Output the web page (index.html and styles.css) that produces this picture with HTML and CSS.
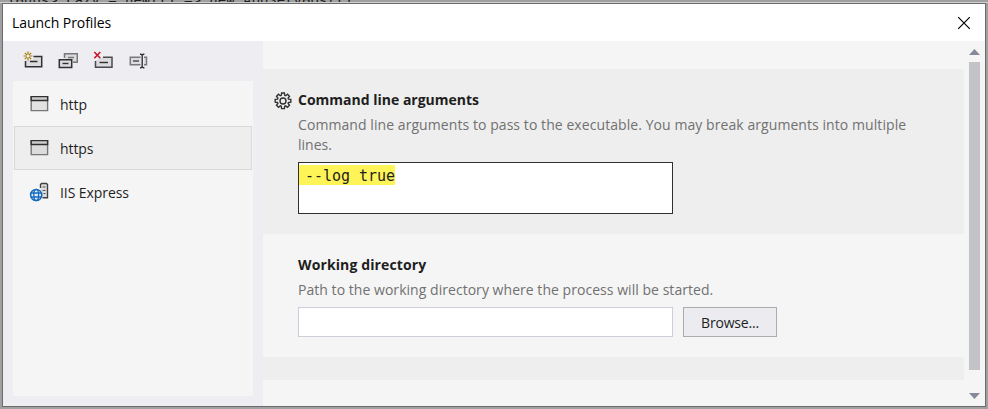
FILE: index.html
```html
<!DOCTYPE html>
<html lang="en">
<head>
<meta charset="utf-8">
<title>Launch Profiles</title>
<link rel="stylesheet" href="styles.css">
</head>
<body>
<div class="backdrop-code">IHubs&gt; Lazy = new(() =&gt; new AppServHost()</div>
<main class="dialog">
  <header class="titlebar">
    <h1>Launch Profiles</h1>
    <svg class="close" width="14" height="14" viewBox="0 0 14 14"><path d="M1.200 1.200l11.600 11.600M12.800 1.200L1.200 12.800" stroke="#000" stroke-width="1.200"/></svg>
  </header>
  <div class="body">
    <aside class="side">
      <div class="toolbar">
        <svg width="20" height="20" viewBox="0 0 20 20" fill="none"><path d="M10.500 6h8v9.500h-16V9.500l8-1z" fill="#dcdcde"/><path d="M10.500 5.500h8.200v10.200H2.500V10M7 10.500h7.500" stroke="#303030" stroke-width="1.500"/><path d="M5 .5v9M.5 5h9M1.800 1.800l6.400 6.400M8.200 1.800L1.800 8.200" stroke="#a57a0a" stroke-width="1.200"/><circle cx="5" cy="5" r="1.500" fill="#f0f0f5"/></svg>
        <svg width="20" height="20" viewBox="0 0 20 20" fill="none"><path d="M6.500 7V2.700h12.800v8.500H15M10 6.500h6" fill="#dcdcde" stroke="#77777b" stroke-width="1.500"/><path d="M1.300 8.700h12.400v7.800H1.300z" fill="#dcdcde" stroke="#303030" stroke-width="1.500"/><path d="M4.500 12.500h6" stroke="#303030" stroke-width="1.400"/></svg>
        <svg width="20" height="20" viewBox="0 0 20 20" fill="none"><path d="M10 6.200h9v10H2.500V10" fill="#dcdcde" stroke="#4a4a4c" stroke-width="1.500"/><path d="M6.500 11.500H15" stroke="#303030" stroke-width="1.400"/><path d="M1.300 1l6 6.200M7.300 1l-6 6.200" stroke="#c91528" stroke-width="1.600"/></svg>
        <svg width="20" height="20" viewBox="0 0 20 20" fill="none"><path d="M12.500 6.300H2.300v7.400h10.200M16 6.300h2.500v7.400H16" fill="#dcdcde" stroke="#79797d" stroke-width="1.500"/><path d="M5 10h6" stroke="#505054" stroke-width="1.500"/><path d="M12 3.300h1l1.200 1 1.200-1h1M14.200 4v12M12 16.700h1l1.200-1 1.200 1h1" stroke="#303030" stroke-width="1.400"/></svg>
      </div>
      <ul class="profiles">
        <li><svg width="20" height="20" viewBox="0 0 20 20"><path d="M2.200 2.600h16.400v14H2.200z" fill="#e2e2e2" stroke="#777" stroke-width="1.400"/><path d="M2.200 6.500V2.600h16.400v3.900z" fill="#ccc" stroke="#303030" stroke-width="1.400"/></svg><span>http</span></li>
        <li class="selected"><svg width="20" height="20" viewBox="0 0 20 20"><path d="M2.200 2.600h16.400v14H2.200z" fill="#dcdcdc" stroke="#777" stroke-width="1.400"/><path d="M2.200 6.500V2.600h16.400v3.900z" fill="#ccc" stroke="#303030" stroke-width="1.400"/></svg><span class="t-https">https</span></li>
        <li><svg width="20" height="20" viewBox="0 0 20 20" fill="none"><path d="M11.500 6V2.500l1-1h5l1 1v13.300h-5" fill="#dedede" stroke="#404040" stroke-width="1.400"/><path d="M13.500 5h3M13.500 8.500h3M14.500 11.500h2" stroke="#555"/><circle cx="7.200" cy="13" r="5.600" fill="#dcecf9" stroke="#1469bd" stroke-width="1.500"/><path d="M1.700 11h11M1.700 15h11" stroke="#1469bd" stroke-width="1.300"/><ellipse cx="7.200" cy="13" rx="2.400" ry="5.600" stroke="#1469bd" stroke-width="1.300"/></svg><span class="t-iis">IIS Express</span></li>
      </ul>
    </aside>
    <div class="content">
      <div class="sections">
        <section class="option shaded">
          <svg class="gear" width="18" height="18" viewBox="0 0 18 18" fill="none" stroke="#303030" stroke-width="1.400"><path d="M7.600 1h2.800l.3 2.300 1 .4 1.800-1.400 2 2-1.400 1.800.4 1 2.300.3v2.800l-2.300.3-.4 1 1.400 1.800-2 2-1.800-1.400-1 .4-.3 2.300H7.600l-.3-2.300-1-.4-1.800 1.400-2-2 1.400-1.800-.4-1-2.300-.3V7.400l2.300-.3.4-1-1.400-1.800 2-2 1.800 1.400 1-.4z"/><circle cx="9" cy="9" r="3"/></svg>
          <h2>Command line arguments</h2>
          <p><span class="t-desc">Command line arguments to pass to the executable. You may break arguments into multiple</span><br>lines.</p>
          <div class="args"><mark>--log true</mark></div>
        </section>
        <section class="option">
          <h2 class="t-work">Working directory</h2>
          <p class="t-path">Path to the working directory where the process will be started.</p>
          <div class="row"><div class="field"></div><button>Browse...</button></div>
        </section>
        <div class="next"></div>
      </div>
      <div class="scrollbar">
        <svg width="11" height="6" viewBox="0 0 11 6"><path d="M5.500 0L11 6H0z" fill="#868999"/></svg>
        <div class="thumb"></div>
        <svg width="11" height="6" viewBox="0 0 11 6"><path d="M0 0h11L5.500 6z" fill="#868999"/></svg>
      </div>
    </div>
  </div>
</main>
</body>
</html>
```
FILE: styles.css
```css
* { box-sizing: border-box; }
body {
  margin: 0;
  width: 988px;
  height: 409px;
  overflow: hidden;
  background: #a0a0a0;
  color: #1e1e1e;
  font: 14px/20px "Open Sans", "Noto Sans", sans-serif;
}
h1, h2, p, ul { margin: 0; padding: 0; }
svg { display: block; flex: none; }
span { white-space: nowrap; }
.backdrop-code {
  height: 3px;
  padding-left: 7px;
  overflow: hidden;
  line-height: 1px;
  white-space: pre;
  font-family: "DejaVu Sans Mono", monospace;
  border-bottom: 1px solid #d0d0d0;
}
.dialog {
  width: 984px;
  height: 404px;
  margin-left: 2px;
  border: 1px solid #6c6c6c;
  background: #fff;
}
.titlebar {
  display: flex;
  align-items: center;
  justify-content: space-between;
  height: 37px;
  padding: 0 14px 0 9px;
}
h1 { font-size: 14px; font-weight: 400; color: #000; letter-spacing: -0.06px; }
.body { display: flex; height: 365px; }
.side {
  display: flex;
  flex-direction: column;
  width: 260px;
  padding: 10px 10px 10px;
  background: #eeeef2;
}
.toolbar { display: flex; gap: 15px; height: 30px; padding-left: 10px; }
.profiles {
  flex: 1;
  padding: 1px;
  list-style: none;
  background: #f5f5f5;
}
.profiles li {
  display: flex;
  align-items: center;
  gap: 11px;
  height: 44px;
  padding-left: 14px;
  border: 1px solid transparent;
}
.profiles span { padding-top: 2px; }
.profiles .selected { border-color: #d9d9d9; background: #eee; }
.t-https, .t-iis { letter-spacing: -0.08px; }
.content { display: flex; flex: 1; background: #f5f5f5; }
.sections { width: 701px; padding-top: 28px; }
.option { position: relative; height: 123px; padding: 21px 35px 0; }
.shaded { height: 165px; background: #eee; }
h2 { font-size: 14px; line-height: 20px; }
p { margin-top: 5px; color: #717171; }
.t-desc { letter-spacing: 0.07px; }
.t-work { letter-spacing: 0.12px; }
.t-path { letter-spacing: 0.04px; }
.gear { position: absolute; left: 11px; top: 23px; }
.args {
  width: 375px;
  height: 52px;
  margin-top: 7px;
  padding-top: 2px;
  border: 1px solid #303030;
  background: #fff;
}
mark {
  display: block;
  width: 96px;
  height: 20px;
  padding-left: 6px;
  background: #fff457;
  color: #1e1e1e;
  font: 15px/22px "DejaVu Sans Mono", monospace;
  letter-spacing: -0.03px;
  white-space: pre;
}
.row { display: flex; gap: 10px; margin-top: 7px; }
.field { width: 375px; height: 30px; border: 1px solid #cccedb; background: #fff; }
button {
  width: 94px;
  height: 30px;
  padding: 2px 0 0;
  border: 1px solid #acacac;
  background: #ececf0;
  color: #1e1e1e;
  font: inherit;
  letter-spacing: -0.2px;
}
.next { height: 23px; background: #eee; }
.scrollbar {
  display: flex;
  flex-direction: column;
  width: 21px;
  padding: 8px 5px 7px;
}
.thumb { width: 11px; height: 308px; margin: 7px 0 23px; background: #c2c3c9; }
```
